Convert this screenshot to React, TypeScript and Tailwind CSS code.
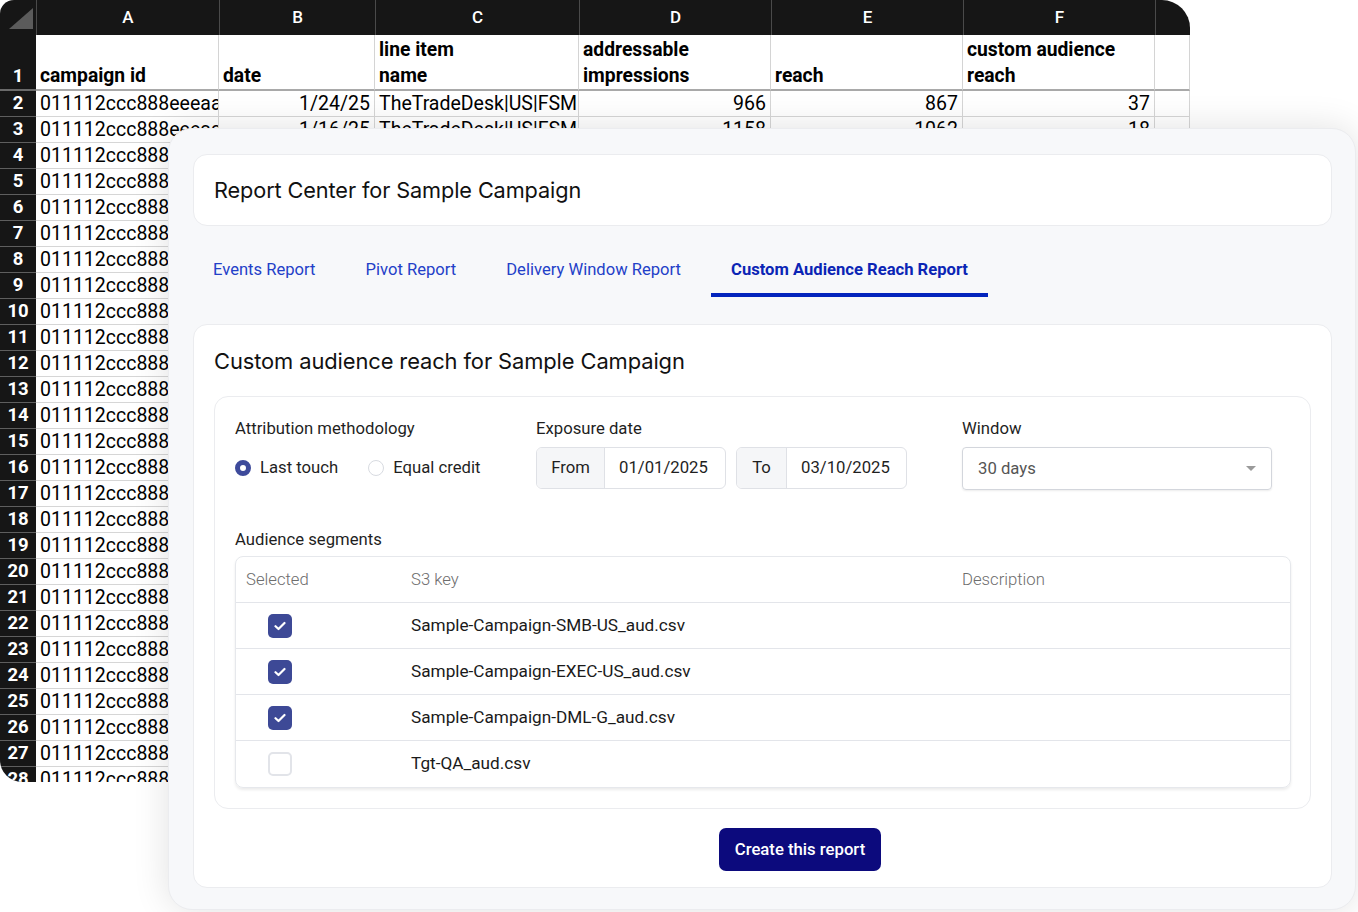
import React from 'react';

const colWidths = ['w-[183px]', 'w-[156px]', 'w-[204px]', 'w-[192px]', 'w-[192px]', 'w-[192px]', 'w-[35px]'];
const colAlign = ['justify-start', 'justify-end', 'justify-start', 'justify-end', 'justify-end', 'justify-end', 'justify-start'];
const letters = ['A', 'B', 'C', 'D', 'E', 'F', ''];
const headers = [
  ['', 'campaign id'],
  ['', 'date'],
  ['line item', 'name'],
  ['addressable', 'impressions'],
  ['', 'reach'],
  ['custom audience', 'reach'],
  ['', ''],
];

const id = '011112ccc888eeeaaa222';
const sheetRows: string[][] = [
  [id, '1/24/25', 'TheTradeDesk|US|FSM', '966', '867', '37', ''],
  [id, '1/16/25', 'TheTradeDesk|US|FSM', '1158', '1062', '18', ''],
  ...Array.from({ length: 25 }, (_, i) => [id, `${(i % 9) + 1}/0${(i % 8) + 1}/25`, 'TheTradeDesk|US|FSM', `${800 + i * 13}`, `${700 + i * 11}`, `${10 + i}`, '']),
];

const segments = [
  { key: 'Sample-Campaign-SMB-US_aud.csv', checked: true },
  { key: 'Sample-Campaign-EXEC-US_aud.csv', checked: true },
  { key: 'Sample-Campaign-DML-G_aud.csv', checked: true },
  { key: 'Tgt-QA_aud.csv', checked: false },
];

const tabs = ['Events Report', 'Pivot Report', 'Delivery Window Report', 'Custom Audience Reach Report'];

const Sheet: React.FC = () => (
  <div className="h-[782px] w-[1190px] overflow-hidden rounded-tl-[14px] rounded-tr-[28px] rounded-bl-[22px] bg-white font-['Roboto',sans-serif] text-black">
    <div className="flex h-[35px] bg-[#161616]">
      <div className="w-[36px] shrink-0">
        <svg width="36" height="35" viewBox="0 0 36 35">
          <polygon points="33,8 33,29 9,29" fill="#5b5b5b" />
        </svg>
      </div>
      {letters.map((l, i) => (
        <div
          key={i}
          className={`${colWidths[i]} flex shrink-0 items-center justify-center border-l border-[#4a4a4a] text-[17px] font-medium text-white`}
        >
          {l}
        </div>
      ))}
    </div>
    <div className="flex h-[56px]">
      <div className="flex w-[36px] shrink-0 items-end justify-center border-b-2 border-[#6a6a6a] bg-[#161616] text-[18.5px] font-bold leading-[26px] text-white">
        1
      </div>
      {headers.map((h, i) => (
        <div
          key={i}
          className={`${colWidths[i]} flex shrink-0 flex-col justify-end overflow-hidden whitespace-nowrap border-r border-b-2 border-r-[#d4d4d4] border-b-[#a9a9a9] px-[4px] text-[19.3px] font-bold leading-[26px]`}
        >
          {h[0] && <span>{h[0]}</span>}
          <span>{h[1]}</span>
        </div>
      ))}
    </div>
    {sheetRows.concat([[id, '', '', '', '', '', '']]).map((row, r) => (
      <div key={r} className="flex h-[26px]">
        <div className="flex w-[36px] shrink-0 items-center justify-center border-b border-[#5e5e5e] bg-[#161616] text-[18.5px] font-bold text-white">
          {r + 2}
        </div>
        {row.map((c, i) => (
          <div
            key={i}
            className={`${colWidths[i]} ${colAlign[i]} flex shrink-0 items-center overflow-hidden whitespace-nowrap border-r border-b border-[#d6d6d6] px-[4px] text-[19.5px] leading-[26px]`}
          >
            {c}
          </div>
        ))}
      </div>
    ))}
  </div>
);

const Check: React.FC<{ checked: boolean }> = ({ checked }) =>
  checked ? (
    <span className="flex h-[24px] w-[24px] items-center justify-center rounded-[5px] bg-[#3d4996]">
      <svg width="12" height="10" viewBox="0 0 12 10" fill="none">
        <path d="M1.5 5.2 4.5 8 10.5 2" stroke="white" strokeWidth="2.2" strokeLinecap="round" strokeLinejoin="round" />
      </svg>
    </span>
  ) : (
    <span className="h-[24px] w-[24px] rounded-[5px] border-2 border-[#e2e4e9] bg-white" />
  );

const Panel: React.FC = () => (
  <div className="absolute left-[168px] top-[128px] h-[782px] w-[1188px] rounded-[24px] border border-[#ebecef] bg-[#f7f8fa] pl-[24px] pr-[23px] pt-[25px] font-['Roboto',sans-serif] shadow-[0_0_36px_rgba(0,0,0,0.12)]">
    <div className="flex h-[72px] items-center rounded-[14px] border border-[#ebecef] bg-white px-[20px]">
      <h1 className="font-['Inter',sans-serif] text-[21.7px] font-normal tracking-[-0.1px] text-[#111]">
        Report Center for Sample Campaign
      </h1>
    </div>

    <div className="mt-[26px] flex gap-[10px]">
      {tabs.map((t, i) => {
        const active = i === tabs.length - 1;
        return (
          <div
            key={t}
            className={`h-[45px] px-[20px] pt-[8px] text-[16.6px] leading-[20px] ${
              active ? 'border-b-4 border-[#0324bd] font-bold text-[#0b25b5]' : 'text-[#2340c8]'
            }`}
          >
            {t}
          </div>
        );
      })}
    </div>

    <div className="mt-[27px] rounded-[14px] border border-[#ebecef] bg-white px-[20px] pb-[16px] pt-[22px]">
      <h2 className="font-['Inter',sans-serif] text-[21.9px] font-normal leading-[28px] tracking-[-0.1px] text-[#111]">
        Custom audience reach for Sample Campaign
      </h2>

      <div className="mt-[21px] rounded-[14px] border border-[#ebecef] pb-[20px] pl-[20px] pr-[19px] pt-[22px] text-[16.7px] text-[#1f1f1f]">
        <div className="flex">
          <div className="w-[301px] shrink-0">
            <div className="leading-[20px]">Attribution methodology</div>
            <div className="mt-[8px] flex h-[42px] items-center">
              <span className="h-[16px] w-[16px] rounded-full border-[5px] border-[#3d4a9b] bg-white" />
              <span className="ml-[9px]">Last touch</span>
              <span className="ml-[30px] h-[16px] w-[16px] rounded-full border border-[#d8dbe1] bg-white" />
              <span className="ml-[9px]">Equal credit</span>
            </div>
          </div>
          <div className="w-[426px] shrink-0">
            <div className="leading-[20px]">Exposure date</div>
            <div className="mt-[8px] flex gap-[10px]">
              <div className="flex h-[42px] w-[190px] overflow-hidden rounded-[6px] border border-[#dfe1e6]">
                <span className="flex w-[68px] items-center justify-center border-r border-[#dfe1e6] bg-[#f5f6f8]">From</span>
                <span className="flex items-center pl-[14px]">01/01/2025</span>
              </div>
              <div className="flex h-[42px] w-[171px] overflow-hidden rounded-[6px] border border-[#dfe1e6]">
                <span className="flex w-[50px] items-center justify-center border-r border-[#dfe1e6] bg-[#f5f6f8]">To</span>
                <span className="flex items-center pl-[14px]">03/10/2025</span>
              </div>
            </div>
          </div>
          <div className="w-[310px] shrink-0">
            <div className="leading-[20px]">Window</div>
            <div className="mt-[8px] flex h-[43px] items-center justify-between rounded-[4px] border border-[#d3d6dc] px-[15px] text-[#555] shadow-[0_1px_2px_rgba(0,0,0,0.08)]">
              <span>30 days</span>
              <svg width="10" height="5" viewBox="0 0 10 5">
                <polygon points="0,0 10,0 5,5" fill="#9a9a9a" />
              </svg>
            </div>
          </div>
        </div>

        <div className="mt-[40px] leading-[20px]">Audience segments</div>
        <div className="mt-[6px] overflow-hidden rounded-[8px] border border-[#e6e8ec] shadow-[0_2px_3px_rgba(0,0,0,0.08)]">
          <div className="flex h-[46px] items-center border-b border-[#e3e5ea] font-light text-[#6d6d6d]">
            <span className="w-[165px] pl-[10px]">Selected</span>
            <span className="w-[551px] pl-[10px]">S3 key</span>
            <span className="pl-[10px]">Description</span>
          </div>
          {segments.map((s, i) => (
            <div
              key={s.key}
              className={`flex h-[46px] items-center ${i < segments.length - 1 ? 'border-b border-[#e3e5ea]' : ''}`}
            >
              <span className="flex w-[165px] pl-[32px]">
                <Check checked={s.checked} />
              </span>
              <span className="pl-[10px] text-[17.2px] text-[#1a1a1a]">{s.key}</span>
            </div>
          ))}
        </div>
      </div>

      <button className="ml-[505px] mt-[19px] h-[43px] w-[162px] rounded-[7px] bg-[#0c0a7d] text-[16.7px] font-medium text-white">
        Create this report
      </button>
    </div>
  </div>
);

export default function App() {
  return (
    <div className="relative h-[912px] w-[1358px] overflow-hidden bg-white">
      <Sheet />
      <Panel />
    </div>
  );
}
